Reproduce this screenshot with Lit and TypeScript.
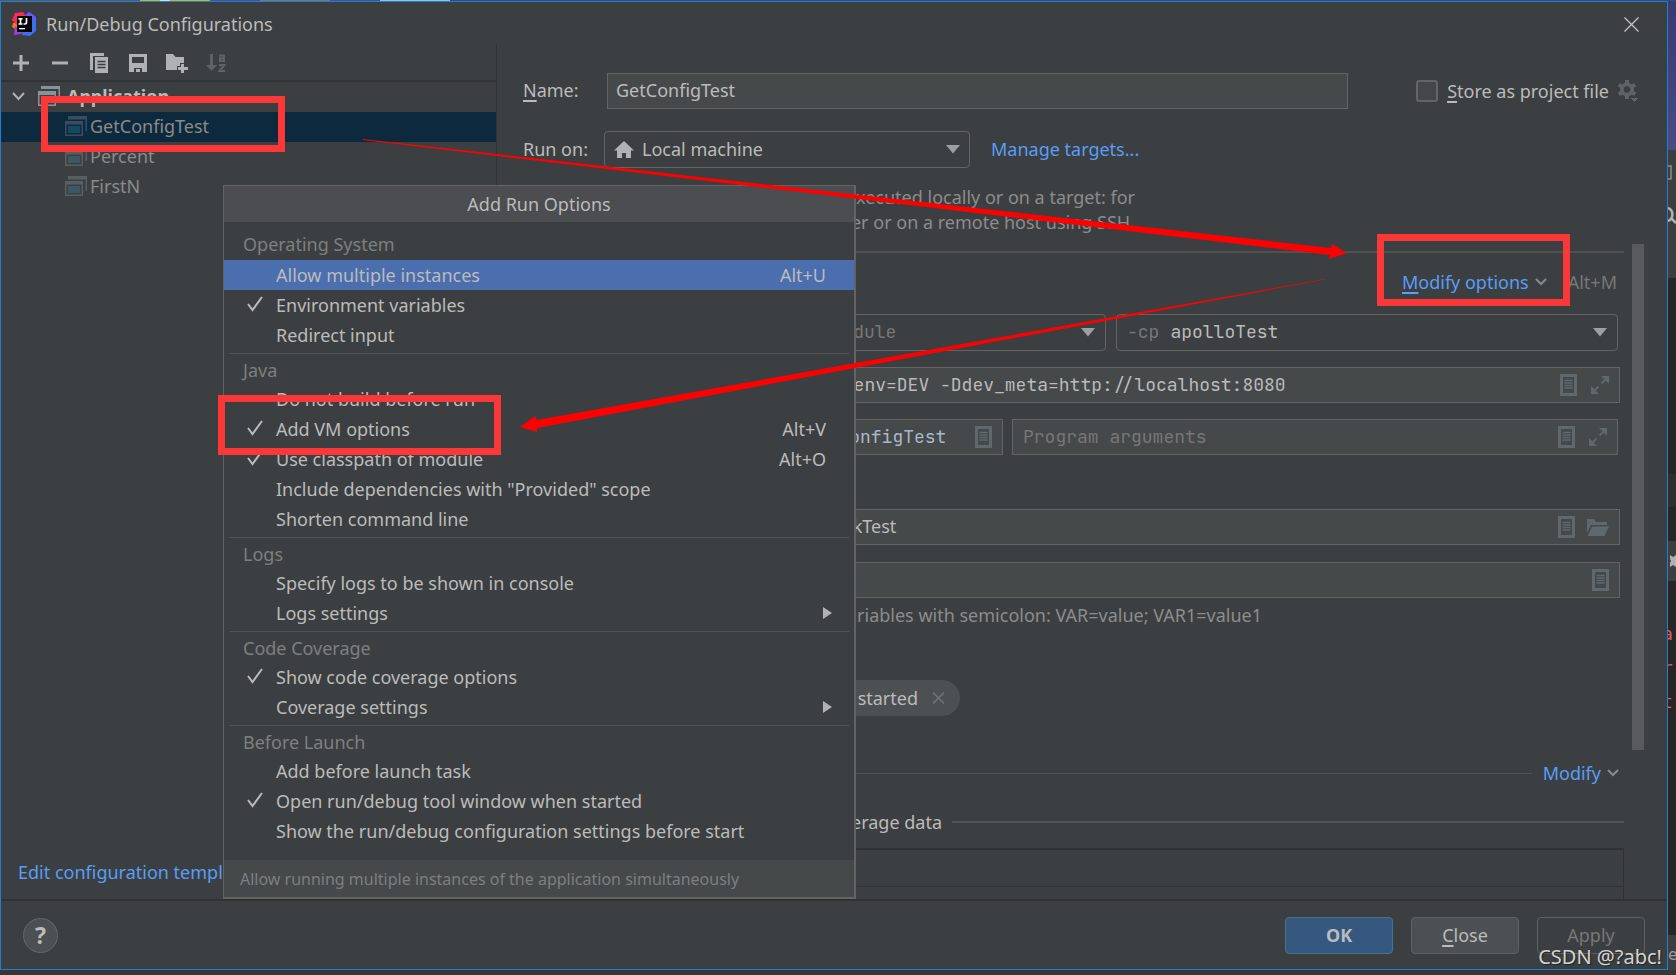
import { LitElement, html, svg, css, nothing } from "lit";
import { customElement, property, state } from "lit/decorators.js";
import { classMap } from "lit/directives/class-map.js";

const icons: Record<string, { size: [number, number]; box: string; body: unknown }> = {
  add: { size: [16, 16], box: "0 0 16 16", body: svg`<path fill="#afb1b3" d="M6.5 0h3v6.5H16v3H9.5V16h-3V9.5H0v-3h6.500z"/>` },
  remove: { size: [16, 16], box: "0 0 16 16", body: svg`<path fill="#afb1b3" d="M0 6.500h16v3H0z"/>` },
  copy: {
    size: [19, 20], box: "0 0 19 20",
    body: svg`<path fill="#afb1b3" d="M0 0h14v3H3v14H0zM5 4h13v16H5z"/><path stroke="#3c3f41" stroke-width="1.300" d="M7.500 8.500h8M7.500 11.500h8M7.500 14.500h8"/>`,
  },
  save: {
    size: [18, 18], box: "0 0 18 18",
    body: svg`<path fill="#afb1b3" fill-rule="evenodd" d="M0 0h18v18H13v-4H5v4H0zM3 3v6h12V3z"/><path fill="#afb1b3" d="M7 15h4v3H7z"/>`,
  },
  folderAdd: {
    size: [22, 20], box: "0 0 22 20",
    body: svg`<path fill="#afb1b3" d="M0 1h7l2.500 3H18v6h-4v3h-3v4H0z"/><path fill="#afb1b3" d="M15 11h3v3h4v3h-4v3h-3v-3h-3v-3h3z"/>`,
  },
  sort: {
    size: [20, 20], box: "0 0 20 20",
    body: svg`<path fill="#606365" d="M4 1h3v11h4l-5.500 6L0 12h4z"/><path fill="none" stroke="#606365" stroke-width="2" d="M13 2.500h5V8h-4V5.300h4M13 12h5.500L13.500 18H19"/>`,
  },
  close: { size: [15, 15], box: "0 0 15 15", body: svg`<path stroke="#c4c4c4" stroke-width="1.300" d="M.5.5l14 14M14.500.500l-14 14"/>` },
  chevron: { size: [13, 9], box: "0 0 13 9", body: svg`<path fill="none" stroke="#afb1b3" stroke-width="2" d="M1 1l5.500 6L12 1"/>` },
  chevronSmall: { size: [12, 8], box: "0 0 12 8", body: svg`<path fill="none" stroke="#868a8d" stroke-width="2.200" d="M1 1l5 5 5-5"/>` },
  appGroup: {
    size: [22, 20], box: "0 0 22 20",
    body: svg`<path fill="#87939a" d="M3 0h19v16h-1.500V3H3z"/><path fill="#87939a" fill-rule="evenodd" d="M0 5h18v15H0zM1.500 9v9.500h15V9z"/><path fill="#4d585e" d="M3.500 11h11v6h-11z"/>`,
  },
  app: {
    size: [22, 20], box: "0 0 22 20",
    body: svg`<path fill="#9aa7b0" opacity=".3" d="M3 0h19v15h-1.500V3.500H3z"/><path fill="#9aa7b0" opacity=".3" fill-rule="evenodd" d="M0 5h18v15H0zM1.500 8.500v10h15v-10z"/><path fill="#40b6e0" opacity=".22" d="M3 10h12v7H3z"/>`,
  },
  home: { size: [20, 18], box: "0 0 20 18", body: svg`<path fill="#afb1b3" d="M10 0l10 9.500h-3V17h-5v-5H8v5H3V9.500H0z"/>` },
  down: { size: [14, 9], box: "0 0 14 9", body: svg`<path fill="#9da0a2" d="M0 0h14L7 8.500z"/>` },
  right: { size: [9, 12], box: "0 0 9 12", body: svg`<path fill="#afb1b3" d="M0 0l9 6-9 6z"/>` },
  check: { size: [16, 16], box: "0 0 16 16", body: svg`<path fill="none" stroke="#bbb" stroke-width="2" d="M1 8l4.500 6L15 1"/>` },
  gear: {
    size: [22, 22], box: "0 0 22 22",
    body: svg`<g fill="#606365"><path d="M7 0h4v19H7z"/><path d="M7 0h4v19H7z" transform="rotate(60 9 9.500)"/><path d="M7 0h4v19H7z" transform="rotate(120 9 9.500)"/><circle cx="9" cy="9.500" r="7"/></g><circle cx="9" cy="9.500" r="3.200" fill="#3c3f41"/><path fill="#606365" stroke="#3c3f41" d="M11.500 17.500h10L16.500 22.500z"/>`,
  },
  doc: {
    size: [17, 22], box: "0 0 17 22",
    body: svg`<path fill="#5e686d" fill-rule="evenodd" d="M0 0h17v22H0zM3 3v16h11V3z"/><path stroke="#5e686d" stroke-width="1.300" d="M4.500 6.500h8M4.500 9h8M4.500 11.500h8M4.500 14h8"/>`,
  },
  expand: {
    size: [18, 18], box: "0 0 18 18",
    body: svg`<path fill="#5e686d" d="M10 0h8v8z M0 10v8h8z"/><path stroke="#5e686d" stroke-width="1.800" d="M10.500 7.500L15 3M7.500 10.500L3 15"/>`,
  },
  folder: {
    size: [22, 17], box: "0 0 22 17",
    body: svg`<path fill="#5e686d" d="M0 0h7l2 3h11v3H4L0 14z"/><path fill="#5e686d" d="M5 7.500h17L17.500 17H.500z"/>`,
  },
  chipX: { size: [13, 12], box: "0 0 13 12", body: svg`<path stroke="#6f767a" stroke-width="1.500" d="M1 .5l11 11M12 .5l-11 11"/>` },
  logo: {
    size: [25, 24], box: "0 0 25 24",
    body: svg`<path fill="#f97a12" d="M1 11l5-1v9l-6-4z"/><path fill="#fe2857" d="M3 1l8-1 3 4-9 9L0 8z"/><path fill="#3d6ff0" d="M13 4l4-4 7 5v14l-6 5-8-1z"/><path fill="#6b57ff" d="M13 4l4-4 7 5-4 2z"/><path fill="#a23bd8" d="M2 23l1-9 8 6-2 2z"/><path fill="#000" d="M5 4h15v16H5z"/><path fill="none" stroke="#fff" stroke-width="1.700" d="M6.500 6.800h4M6.500 12h4M8.500 6.500V12M14.500 6v4.500q0 1.500-1.500 1.500h-1.500"/><path fill="#fff" d="M7 16h6v1.300H7z"/>`,
  },
  window: { size: [8, 16], box: "0 0 8 16", body: svg`<path fill="none" stroke="#8a8c8e" stroke-width="1.500" d="M0 1h3v13H0"/>` },
  search: { size: [8, 20], box: "0 0 8 20", body: svg`<path fill="none" stroke="#afb1b3" stroke-width="2.500" d="M0 2a7 7 0 0 1 0 13M4 13l4 4"/>` },
  spark: { size: [8, 12], box: "0 0 8 12", body: svg`<path fill="#b0b0b0" d="M2 0l3 2 3-2v12l-3-2-3 2V8L3 6 2 4z"/>` },
};

@customElement("ui-icon")
class UiIcon extends LitElement {
  static styles = css`
    :host { display: inline-flex; flex: none; }
    svg { display: block; }
  `;
  @property() name = "";
  render() {
    const icon = icons[this.name];
    return html`<svg width=${icon.size[0]} height=${icon.size[1]} viewBox=${icon.box} aria-hidden="true">${icon.body}</svg>`;
  }
}

interface MenuItem { label: string; checked?: boolean; keys?: string; submenu?: boolean; }

const groups: { title: string; items: MenuItem[] }[] = [
  {
    title: "Operating System",
    items: [
      { label: "Allow multiple instances", keys: "Alt+U" },
      { label: "Environment variables", checked: true },
      { label: "Redirect input" },
    ],
  },
  {
    title: "Java",
    items: [
      { label: "Do not build before run" },
      { label: "Add VM options", checked: true, keys: "Alt+V" },
      { label: "Use classpath of module", checked: true, keys: "Alt+O" },
      { label: 'Include dependencies with "Provided" scope' },
      { label: "Shorten command line" },
    ],
  },
  {
    title: "Logs",
    items: [{ label: "Specify logs to be shown in console" }, { label: "Logs settings", submenu: true }],
  },
  {
    title: "Code Coverage",
    items: [{ label: "Show code coverage options", checked: true }, { label: "Coverage settings", submenu: true }],
  },
  {
    title: "Before Launch",
    items: [
      { label: "Add before launch task" },
      { label: "Open run/debug tool window when started", checked: true },
      { label: "Show the run/debug configuration settings before start" },
    ],
  },
];

@customElement("options-menu")
class OptionsMenu extends LitElement {
  static styles = css`
    :host {
      display: block;
      box-sizing: border-box;
      background: #3c3f41;
      border: 1px solid #616365;
      border-width: 1px 2px 2px 1px;
      color: #bbb;
    }
    .title { margin: 0; font-size: 18px; font-weight: 400; line-height: 36px; text-align: center; background: #4b4d50; }
    .groups { padding: 8px 0 14px; }
    .group + .group { padding-top: 3px; }
    .group + .group::before { content: ""; display: block; height: 1px; margin: 0 5px; background: #515456; }
    .heading { height: 30px; margin: 0; padding-left: 19px; font-size: 18px; font-weight: 400; line-height: 28px; color: #7d7f80; }
    .group + .group .heading { line-height: 32px; }
    .item {
      display: grid;
      grid-template-columns: 29px 1fr auto;
      align-items: center;
      width: 100%;
      height: 30px;
      padding: 0 28px 0 23px;
      border: 0;
      background: none;
      color: inherit;
      font: inherit;
      text-align: left;
    }
    .item.current { background: #4b6eaf; }
    .arrow { margin-right: -6px; }
    .foot { margin: 0; padding-left: 16px; font-size: 16px; line-height: 38px; height: 37px; background: #45494a; color: #7d7f80; }
  `;
  @state() current = "Allow multiple instances";
  render() {
    return html`
      <h2 class="title">Add Run Options</h2>
      <div class="groups" role="menu">
        ${groups.map(
          (group) => html`<div class="group">
            <h3 class="heading">${group.title}</h3>
            ${group.items.map(
              (item) => html`<button
                class=${classMap({ item: true, current: item.label === this.current })}
                role="menuitem"
                @mouseenter=${() => (this.current = item.label)}
              >
                <span>${item.checked ? html`<ui-icon name="check"></ui-icon>` : nothing}</span>
                <span>${item.label}</span>
                ${item.submenu ? html`<ui-icon class="arrow" name="right"></ui-icon>` : html`<span>${item.keys ?? ""}</span>`}
              </button>`
            )}
          </div>`
        )}
      </div>
      <p class="foot">Allow running multiple instances of the application simultaneously</p>
    `;
  }
}

@customElement("app-root")
class AppRoot extends LitElement {
  static styles = css`
    :host {
      display: block;
      font-family: "Noto Sans", "Open Sans", sans-serif;
      font-size: 18px;
      line-height: 30px;
      color: #bbb;
    }
    * { box-sizing: border-box; }
    button, input, select { font: inherit; color: inherit; outline: none; }
    a { color: #589df6; text-decoration: none; }
    u { text-underline-offset: 3px; text-decoration-thickness: 2px; }
    .screen {
      position: relative;
      display: grid;
      grid-template: 1px 1fr 5px / 1fr 8px;
      height: 100vh;
      min-height: 960px;
      overflow: hidden;
      background: #333537;
    }
    .skyline {
      grid-column: 1 / 3;
      background: linear-gradient(90deg, #555a66 0 140px, #c5b81e 140px 160px, #dcdccc 160px 170px, #c5b81e 170px 210px, #4a5090 210px 260px, #777 260px 330px, #48508c 330px 380px, #9cc0d4 380px 450px, #3f4478 450px);
    }
    .dialog { display: flex; flex-direction: column; min-height: 0; border: 1px solid #1f7fd0; background: #3c3f41; }

    .edge { display: flex; flex-direction: column; overflow: hidden; background: #262626; font-family: "DejaVu Sans Mono", monospace; color: #db5c5c; }
    .sky { height: 149px; background: linear-gradient(#363c70, #474c86); }
    .tools { display: flex; flex-direction: column; gap: 25px; height: 128px; padding-top: 15px; background: #3c3f41; }
    .gap { flex: 196px 0 0; }
    .band { height: 33px; margin-bottom: 34px; background: #2f2f30; }
    .tab { display: flex; align-items: center; height: 40px; margin-bottom: 36px; background: #3c3f41; }
    .code { margin: 0 0 0 -6px; font-size: 18px; line-height: 34px; }
    .status { flex: none; height: 35px; margin-top: auto; background: #3c3f41; color: #999; font-size: 16px; line-height: 40px; }

    .titlebar { display: flex; align-items: center; gap: 9px; height: 42px; padding: 2px 28px 0 11px; }
    .titlebar h1 { flex: 1; margin: 0; font-size: 18px; font-weight: 400; }
    .icon-button { display: flex; padding: 0; border: 0; background: none; }
    .body { display: flex; flex: 1; min-height: 0; }

    .side { display: flex; flex-direction: column; width: 496px; border-right: 1px solid #323232; }
    .toolbar { display: flex; align-items: center; gap: 19px; height: 38px; padding: 2px 0 0 10px; border-bottom: 2px solid #323232; }
    .toolbar .icon-button { justify-content: center; width: 20px; }
    .tree { flex: 1; margin: 0; padding: 0; list-style: none; }
    .node { display: flex; align-items: center; gap: 3px; height: 30px; padding: 0 0 2px 64px; color: #8a8a8a; }
    .node.root { gap: 7px; padding-left: 11px; font-weight: 700; color: #bbb; }
    .node.root .group-icon { margin-left: 6px; }
    .node.selected { background: #0d293e; }
    .templates { padding: 0 0 12px 17px; white-space: nowrap; }

    .main { display: flex; flex: 1; flex-direction: column; min-width: 0; padding: 29px 23px 0 26px; }
    .row { display: flex; align-items: center; }
    .top { padding-right: 4px; }
    label { padding-bottom: 2px; }
    .name-label { width: 84px; }
    .run-label { width: 81px; }
    .run-row { margin-top: 22px; }
    .manage { margin-left: 21px; padding-bottom: 2px; }
    .field { display: flex; align-items: center; gap: 14px; min-width: 0; height: 36px; padding: 0 10px 0 8px; border: 1px solid #646464; background: #45494a; }
    .field input { flex: 1; width: 0; min-width: 0; height: 34px; padding: 0 0 2px; border: 0; background: none; }
    .field input::placeholder { color: #777; opacity: 1; }
    .combo { display: flex; align-items: center; gap: 6px; min-width: 0; height: 37px; padding: 0 9px; border: 1px solid #646464; border-radius: 4px; }
    .combo select { flex: 1; width: 0; min-width: 0; height: 34px; padding: 0 0 2px; border: 0; background: none; appearance: none; }
    .target { gap: 8px; width: 366px; }
    .grow { flex: 1; }
    .mono { font-family: "JetBrains Mono", "DejaVu Sans Mono", monospace; }
    .dim { color: #777; }
    .store { display: flex; align-items: center; gap: 9px; margin-left: 68px; }
    .store label { padding: 0; }
    .store input { width: 22px; height: 22px; margin: 0; appearance: none; border: 2px solid #646464; border-radius: 3px; background: #43474a; }
    .about { width: 531px; margin: 17px 0 0 81px; padding-bottom: 1px; line-height: 25px; text-align: right; white-space: nowrap; color: #8c8c8c; }

    .scroll { display: flex; flex: 1; gap: 8px; min-height: 0; margin-top: 8px; overflow: hidden; }
    .form { flex: 1; min-width: 0; padding-top: 7px; }
    .rule { height: 2px; border: 0; margin: 0; background: #515151; }
    .line { flex: 1; height: 1px; background: #515456; }
    .fields { padding-right: 4px; }
    .section { margin-top: 14px; padding-right: 7px; }
    .section h2 { flex: 1; margin: 0; font-size: 18px; font-weight: 400; }
    .modify { display: flex; align-items: center; gap: 6px; padding: 0; border: 0; background: none; color: #589df6; }
    .keys { margin-left: 21px; color: #777; }
    .sdk { display: grid; grid-template-columns: 583fr 502fr; gap: 10px; margin: 17px 2px 16px 0; }
    .sdk .combo { gap: 11px; padding: 0 10px; }
    .args { display: grid; grid-template-columns: 480fr 606fr; gap: 9px; margin: 16px 2px 54px 0; }
    .args .field { padding-left: 10px; }
    .vm input { padding-left: 300px; }
    .klass input { padding-left: 218px; color: #a9b7c6; }
    .sdk .jre { padding-left: 6px; }
    .labelled { display: grid; grid-template-columns: 210px 1fr; align-items: center; white-space: nowrap; }
    .labelled .field { gap: 12px; }
    .env { margin-top: 17px; }
    .hint { width: 739px; margin: 4px 0 52px; line-height: 26px; text-align: right; color: #8c8c8c; white-space: nowrap; }
    .chip { display: flex; align-items: center; justify-content: flex-end; gap: 14px; width: 437px; height: 36px; padding-right: 15px; border-radius: 18px; background: #4c5052; white-space: nowrap; }
    .before { gap: 11px; margin-top: 42px; padding-right: 5px; }
    .coverage { gap: 10px; margin-top: 19px; }
    .coverage h2 { width: 419px; margin: 0; font-size: 18px; font-weight: 400; text-align: right; white-space: nowrap; }
    .coverage .line { height: 2px; }
    .patterns { height: 80px; margin-top: 11px; border: 1px solid #2f3133; border-top-width: 2px; }
    .patterns div { height: 37px; border-bottom: 1px solid #2f3133; }
    .bar { width: 12px; height: 506px; background: #595a5c; }

    .footer { display: flex; align-items: center; gap: 18px; height: 70px; padding: 0 22px 0 22px; border-top: 2px solid #323232; }
    .help { width: 35px; height: 35px; margin-right: auto; padding: 0; border: 1px solid #656869; border-radius: 50%; background: #4c5052; font-size: 23px; font-weight: 700; line-height: 30px; }
    .action { width: 108px; height: 37px; padding: 0; border: 1px solid #5e6162; border-radius: 4px; background: #4c5052; }
    .action.primary { border-color: #4c708c; background: #365880; font-weight: 700; }
    .action:disabled { background: none; color: #777; }

    .popup { position: absolute; left: 223px; top: 185px; width: 633px; }
    .mark { position: absolute; border: 7px solid #fb3838; pointer-events: none; }
    .mark-config { left: 41px; top: 96px; width: 244px; height: 56px; }
    .mark-modify { left: 1377px; top: 234px; width: 193px; height: 72px; }
    .mark-vm { left: 218px; top: 395px; width: 283px; height: 60px; }
    .arrows { position: absolute; left: 0; top: 0; pointer-events: none; }
    .watermark { position: absolute; right: 14px; bottom: 3px; font-size: 20px; color: #d4d4d4; text-shadow: 1px 1px 1px #222; white-space: nowrap; }
  `;

  private configs = ["GetConfigTest", "Percent", "FirstN"];
  @state() private selected = "GetConfigTest";

  render() {
    return html`
      <div class="screen">
        <div class="skyline"></div>
        <section class="dialog">
          <header class="titlebar">
            <ui-icon name="logo"></ui-icon>
            <h1>Run/Debug Configurations</h1>
            <button class="icon-button" aria-label="Close window"><ui-icon name="close"></ui-icon></button>
          </header>
          <div class="body">${this.renderSide()} ${this.renderMain()}</div>
          <footer class="footer">
            <button class="help" aria-label="Help">?</button>
            <button class="action primary">OK</button>
            <button class="action"><u>C</u>lose</button>
            <button class="action" disabled>Apply</button>
          </footer>
        </section>
        <div class="edge">
          <div class="sky"></div>
          <div class="tools"><ui-icon name="window"></ui-icon><ui-icon name="search"></ui-icon></div>
          <div class="gap"></div>
          <div class="band"></div>
          <div class="tab"><ui-icon name="spark"></ui-icon></div>
          <div class="code">a<br />r<br />t</div>
          <div class="status">er</div>
        </div>
        <options-menu class="popup"></options-menu>
        <div class="mark mark-config"></div>
        <div class="mark mark-modify"></div>
        <div class="mark mark-vm"></div>
        <svg class="arrows" width="1400" height="460" viewBox="0 0 1400 460" aria-hidden="true">
          <path fill="#f00" d="M363 139L1331 248l1-4 15 9-18 6 1-4L363 140z" />
          <path fill="#f00" d="M1325 279L537 420l-2-4-15 11 17 5 0-4L1325 279.500z" />
        </svg>
        <span class="watermark">CSDN @?abc!</span>
      </div>
    `;
  }

  private renderSide() {
    const tools = [
      ["add", "Add"],
      ["remove", "Remove"],
      ["copy", "Copy"],
      ["save", "Save"],
      ["folderAdd", "Create folder"],
      ["sort", "Sort"],
    ];
    return html`<nav class="side">
      <div class="toolbar">
        ${tools.map(([icon, label]) => html`<button class="icon-button" aria-label=${label}><ui-icon name=${icon}></ui-icon></button>`)}
      </div>
      <ul class="tree">
        <li class="node root"><ui-icon name="chevron"></ui-icon><ui-icon class="group-icon" name="appGroup"></ui-icon>Application</li>
        ${this.configs.map(
          (name) => html`<li class=${classMap({ node: true, selected: name === this.selected })} @click=${() => (this.selected = name)}>
            <ui-icon name="app"></ui-icon>${name}
          </li>`
        )}
      </ul>
      <a class="templates" href="#templates">Edit configuration templates...</a>
    </nav>`;
  }

  private renderMain() {
    return html`<main class="main">
      <div class="row top">
        <label class="name-label" for="name"><u>N</u>ame:</label>
        <div class="field grow"><input id="name" value="GetConfigTest" /></div>
        <div class="store">
          <input id="store" type="checkbox" />
          <label for="store"><u>S</u>tore as project file</label>
          <ui-icon class="gear" name="gear"></ui-icon>
        </div>
      </div>
      <div class="row run-row">
        <label class="run-label" for="target">Run on:</label>
        <div class="combo target">
          <ui-icon name="home"></ui-icon>
          <select id="target"><option>Local machine</option></select>
          <ui-icon name="down"></ui-icon>
        </div>
        <a class="manage" href="#targets">Manage targets...</a>
      </div>
      <p class="about">
        Run configurations may be executed locally or on a target: for<br />example in a Docker Container or on a remote host using SSH.
      </p>
      <div class="scroll">
        <div class="form">
          <hr class="rule" />
          <div class="row section">
            <h2>Build and run</h2>
            <button class="modify"><span><u>M</u>odify options</span><ui-icon name="chevronSmall"></ui-icon></button>
            <span class="keys">Alt+M</span>
          </div>
          <div class="fields mono">
            <div class="sdk">
              <div class="combo dim">
                <select class="jre" aria-label="JRE"><option>java 8 SDK of 'apolloTest' module</option></select>
                <ui-icon name="down"></ui-icon>
              </div>
              <div class="combo">
                <label class="dim" for="cp">-cp</label>
                <select id="cp"><option>apolloTest</option></select>
                <ui-icon name="down"></ui-icon>
              </div>
            </div>
            <div class="field vm">
              <input aria-label="VM options" value="-Denv=DEV -Ddev_meta=http://localhost:8080" />
              <ui-icon name="doc"></ui-icon><ui-icon name="expand"></ui-icon>
            </div>
            <div class="args">
              <div class="field klass"><input aria-label="Main class" value="test.GetConfigTest" /><ui-icon name="doc"></ui-icon></div>
              <div class="field">
                <input aria-label="Program arguments" placeholder="Program arguments" />
                <ui-icon name="doc"></ui-icon><ui-icon name="expand"></ui-icon>
              </div>
            </div>
          </div>
          <div class="fields">
            <div class="labelled">
              <label for="dir">Working directory:</label>
              <div class="field">
                <input id="dir" value="D:\\work\\sparkTest" />
                <ui-icon name="doc"></ui-icon><ui-icon name="folder"></ui-icon>
              </div>
            </div>
            <div class="labelled env">
              <label for="env">Environment variables:</label>
              <div class="field"><input id="env" /><ui-icon name="doc"></ui-icon></div>
            </div>
            <p class="hint">Separate variables with semicolon: VAR=value; VAR1=value1</p>
            <div class="chip">
              Open run/debug tool window when started
              <button class="icon-button" aria-label="Remove option"><ui-icon name="chipX"></ui-icon></button>
            </div>
          </div>
          <div class="row before">
            <span class="line"></span>
            <button class="modify">Modify<ui-icon name="chevronSmall"></ui-icon></button>
          </div>
          <div class="row coverage">
            <h2>Packages and classes to include in coverage data</h2>
            <span class="line"></span>
          </div>
          <div class="patterns"><div></div></div>
        </div>
        <div class="bar"></div>
      </div>
    </main>`;
  }
}
